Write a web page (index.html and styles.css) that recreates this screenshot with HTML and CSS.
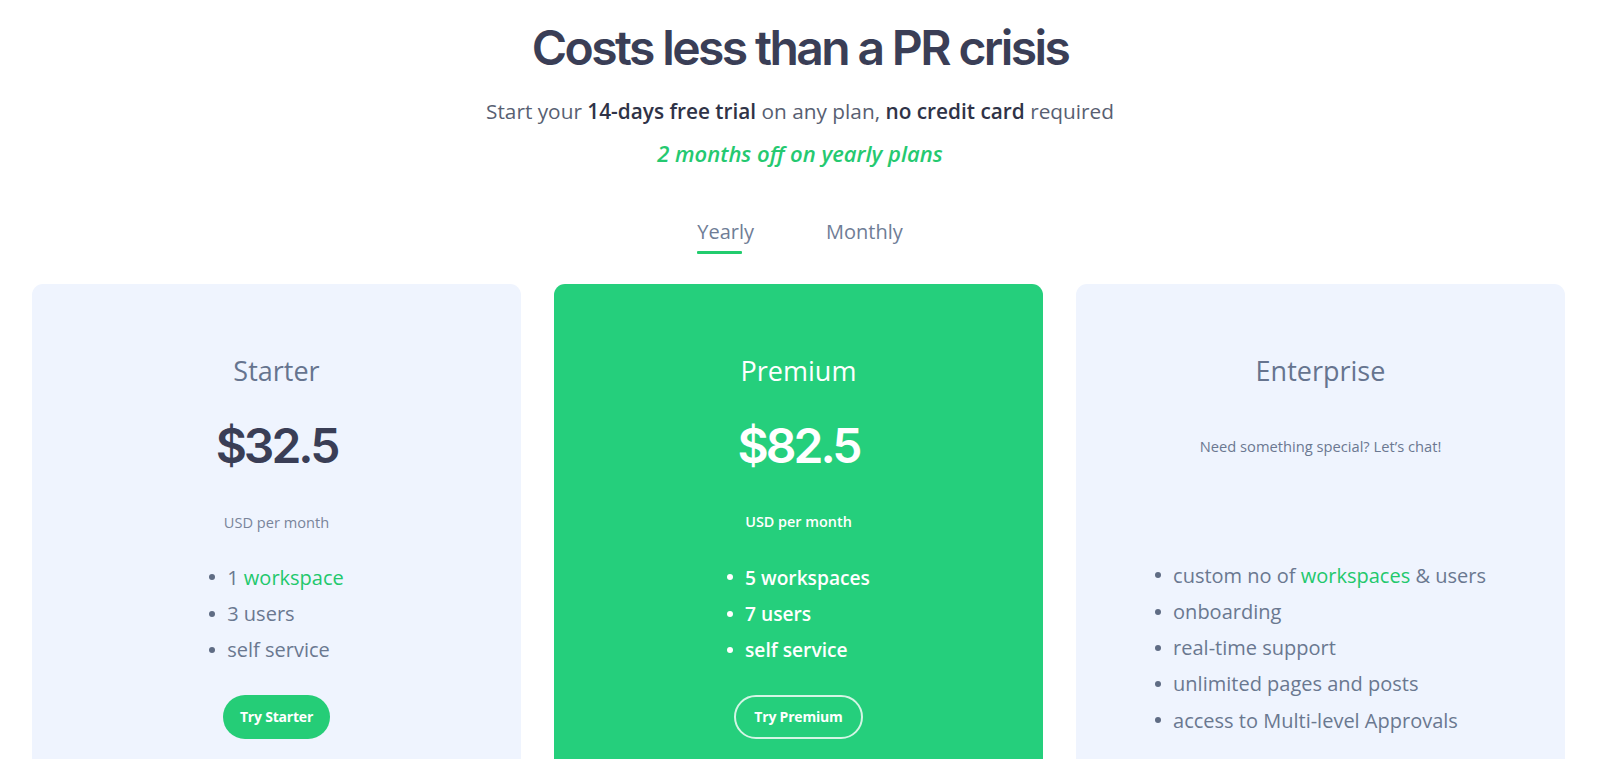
FILE: index.html
```html
<!DOCTYPE html>
<html>
<head>
<meta charset="utf-8">
<link rel="stylesheet" href="styles.css">
</head>
<body>
<div class="page">
  <header class="intro">
    <h1 class="headline">Costs less than a PR crisis</h1>
    <p class="sub">Start your <b>14-days free trial</b> on any plan, <b>no credit card</b> required</p>
    <p class="promo">2 months off on yearly plans</p>
    <nav class="tabs">
      <span class="tab active">Yearly</span>
      <span class="tab">Monthly</span>
    </nav>
  </header>
  <section class="plans">
    <div class="card">
      <h2 class="plan">Starter</h2>
      <div class="mid">
        <div class="price">$32.5</div>
        <div class="unit">USD per month</div>
      </div>
      <ul class="features">
        <li>1 <span class="hl">workspace</span></li>
        <li>3 users</li>
        <li>self service</li>
      </ul>
      <div class="cta"><a class="btn">Try Starter</a></div>
    </div>
    <div class="card featured">
      <h2 class="plan">Premium</h2>
      <div class="mid">
        <div class="price">$82.5</div>
        <div class="unit">USD per month</div>
      </div>
      <ul class="features">
        <li>5 workspaces</li>
        <li>7 users</li>
        <li>self service</li>
      </ul>
      <div class="cta"><a class="btn outline">Try Premium</a></div>
    </div>
    <div class="card">
      <h2 class="plan">Enterprise</h2>
      <div class="mid ent">
        <div class="note">Need something special? Let’s chat!</div>
      </div>
      <ul class="features">
        <li>custom no of <span class="hl">workspaces</span> &amp; users</li>
        <li>onboarding</li>
        <li>real-time support</li>
        <li>unlimited pages and posts</li>
        <li>access to Multi-level Approvals</li>
      </ul>
    </div>
  </section>
</div>
</body>
</html>
```

FILE: styles.css
```css
html, body {
  margin: 0;
  padding: 0;
  background: #ffffff;
  overflow: hidden;
}
body {
  font-family: "Open Sans", "Liberation Sans", sans-serif;
  color: #606a80;
}
.page {
  width: 1600px;
}
.intro {
  text-align: center;
  padding-top: 19px;
}
.headline {
  margin: 0;
  font-family: Inter, "Liberation Sans", sans-serif;
  font-weight: 600;
  font-size: 48px;
  line-height: 58px;
  letter-spacing: -2.6px;
  color: #3a3e56;
}
.sub {
  margin: 19.5px 0 0;
  font-size: 20.8px;
  line-height: 28px;
  color: #585f72;
}
.sub b {
  font-weight: 600;
  color: #2f3347;
}
.promo {
  margin: 14px 0 0;
  font-size: 22px;
  line-height: 28px;
  font-style: italic;
  font-weight: 600;
  color: #25c970;
}
.tabs {
  display: flex;
  justify-content: center;
  gap: 72px;
  margin-top: 52.5px;
}
.tab {
  font-size: 20px;
  line-height: 26px;
  color: #6f7d96;
  padding-bottom: 9px;
  position: relative;
}
.tab.active::after {
  content: "";
  position: absolute;
  left: 0;
  bottom: 0;
  width: 45px;
  height: 3px;
  background: #22cc6e;
  border-radius: 1px;
}
.plans {
  display: grid;
  grid-template-columns: repeat(3, 1fr);
  gap: 33px;
  padding: 0 35px 0 32px;
  margin-top: 30px;
}
.card {
  background: #eff4fe;
  border-radius: 11px;
  padding: 70px 0 40px;
  text-align: center;
  height: 520px;
}
.plan {
  margin: 0;
  font-weight: 400;
  font-size: 27px;
  line-height: 34px;
  color: #66748f;
}
.mid {
  box-sizing: border-box;
  height: 171.6px;
  padding-top: 27.8px;
}
.mid.ent {
  height: 169.6px;
  padding-top: 47.8px;
}
.price {
  font-family: Inter, "Liberation Sans", sans-serif;
  font-weight: 600;
  font-size: 48px;
  line-height: 60px;
  letter-spacing: -3px;
  color: #3a3e56;
}
.unit {
  margin-top: 36.6px;
  font-size: 14.6px;
  line-height: 20px;
  color: #79849a;
}
.note {
  font-size: 14.7px;
  line-height: 20px;
  color: #6b7891;
}
.features {
  display: inline-block;
  vertical-align: top;
  text-align: left;
  margin: 0;
  padding: 0;
  list-style: none;
  font-size: 20px;
  line-height: 36.3px;
  color: #6a7890;
}
.features li::before {
  content: "";
  display: inline-block;
  width: 6px;
  height: 6px;
  border-radius: 50%;
  background: #5f6c84;
  margin-right: 12px;
  vertical-align: middle;
  position: relative;
  top: -2px;
}
.hl {
  color: #22c86c;
}
.cta {
  margin-top: 27px;
}
.btn {
  display: inline-block;
  box-sizing: border-box;
  height: 44px;
  line-height: 44px;
  padding: 0 17px;
  border-radius: 22px;
  background: #25cd77;
  color: #ffffff;
  font-weight: 700;
  font-size: 14px;
  letter-spacing: -0.2px;
}
.featured {
  background: #25cf7c;
}
.featured .plan,
.featured .price,
.featured .unit,
.featured .features {
  color: #ffffff;
}
.featured .unit {
  font-weight: 600;
  font-size: 14.4px;
}
.featured .features {
  font-weight: 600;
  font-size: 19.2px;
}
.featured .features li::before {
  background: #ffffff;
}
.btn.outline {
  background: transparent;
  border: 2px solid rgba(255, 255, 255, 0.8);
  line-height: 40px;
  padding: 0 18.5px;
}
```
